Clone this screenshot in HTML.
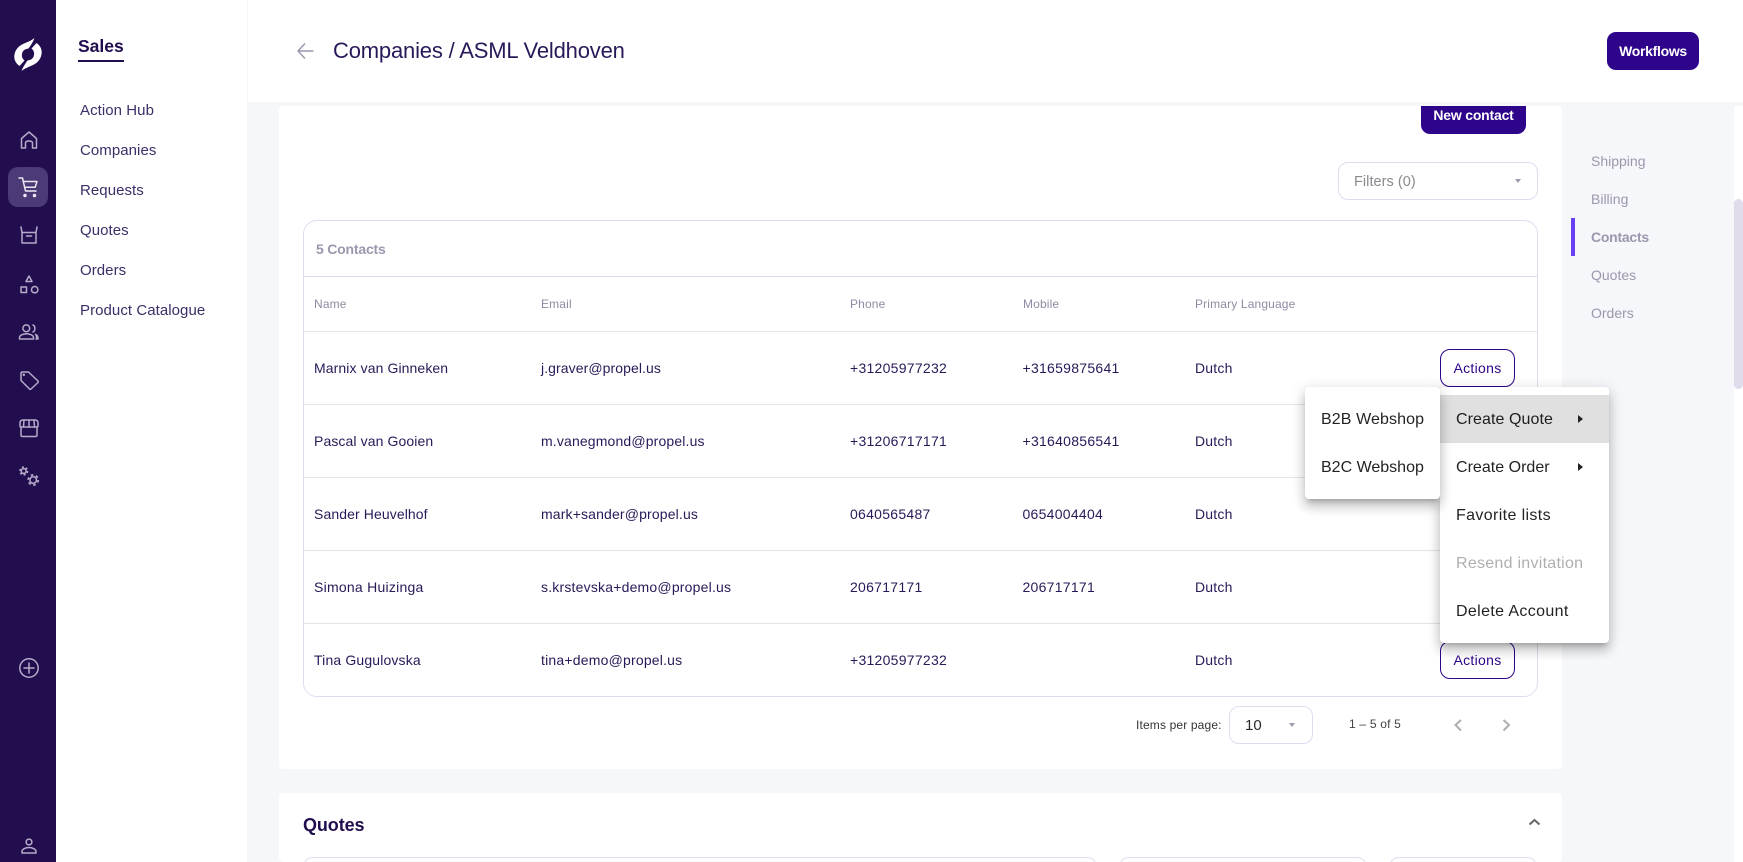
<!DOCTYPE html>
<html lang="en">
<head>
<meta charset="utf-8">
<title>Companies / ASML Veldhoven</title>
<style>
*{box-sizing:border-box}
html,body{margin:0;padding:0;width:1743px;height:862px;overflow:hidden;background:#f6f7fa;font-family:"Liberation Sans",sans-serif;color:#220e4f}
#page{position:relative;width:1743px;height:862px;overflow:hidden;background:#f6f7fa}
.a{position:absolute}
.t{position:absolute;white-space:nowrap;line-height:20px;height:20px}
.rail{left:0;top:0;width:56px;height:862px;background:#220e4f}
.side{left:56px;top:0;width:191px;height:862px;background:#fff}
.head{left:247px;top:0;width:1496px;height:102px;background:#fff;border-left:1px solid #f6f6f9}
.track{left:1734px;top:106px;width:9px;height:756px;background:#fff}
.thumb{left:1734px;top:199px;width:9px;height:190px;background:#e0dcec;border-radius:5px}
.card{background:#fff;border-radius:4px}
.nav{font-size:15px;color:#3d2e68;left:80px;letter-spacing:.06px}
.rnav{font-size:14px;color:#9b97ad;left:1591px}
.box{border:1px solid #e0dcf0;background:#fff}
.line{height:1px;left:304px;width:1233px}
.th{font-size:12px;letter-spacing:.15px;color:#8f8ba3}
.td{font-size:14px;color:#2a1958}
.n{left:314px;letter-spacing:.1px}
.e{left:541px;letter-spacing:.2px}
.p{left:850px;letter-spacing:.27px}
.m{left:1022.5px;letter-spacing:.27px}
.l{left:1195px;letter-spacing:.2px}
.btn{border:1px solid #2e048a;border-radius:10px;background:#fff;color:#2e048a;font-size:14px;letter-spacing:.3px;text-align:center;line-height:36px;left:1440px;width:75px;height:38px}
.menu{background:#fff;border-radius:4px;box-shadow:0 5px 5px -3px rgba(0,0,0,.2),0 8px 10px 1px rgba(0,0,0,.14),0 3px 14px 2px rgba(0,0,0,.12)}
.mi{font-size:16px;color:rgba(0,0,0,.87)}
.caret{width:0;height:0;border-left:3.5px solid transparent;border-right:3.5px solid transparent;border-top:4px solid #9e9ab0}
.ar{width:0;height:0;border-top:4px solid transparent;border-bottom:4px solid transparent;border-left:5px solid #222}
svg{position:absolute;left:0;top:0;overflow:visible}
</style>
</head>
<body>
<div id="page">
<div class="a head"></div>
<div class="a track"></div>
<div class="a thumb"></div>

<div class="a card" style="left:279px;top:106px;width:1283px;height:663px"></div>
<div class="a card" style="left:279px;top:793px;width:1283px;height:69px"></div>

<div class="a rail"></div>
<div class="a" style="left:8px;top:167px;width:40px;height:40px;border-radius:10px;background:#4b3a75"></div>
<div class="a side"></div>

<svg width="56" height="862" fill="none" stroke="#b4aac9" stroke-width="1.5" stroke-linecap="round" stroke-linejoin="round">
  <g stroke="none" fill="#fff">
    <path d="M34.5 38C31 41 27 42 22 44.5C15.5 48 13 55 15 60.5C16 63 17.5 64.5 19.5 66L24.5 60.5C22.5 59 21.5 56.5 22 54C22.5 50.5 25 49 28.5 48.5C31 45 33 42 34.5 38Z"/>
    <path transform="rotate(180 28 54.5)" d="M34.5 38C31 41 27 42 22 44.5C15.5 48 13 55 15 60.5C16 63 17.5 64.5 19.5 66L24.5 60.5C22.5 59 21.5 56.5 22 54C22.5 50.5 25 49 28.5 48.5C31 45 33 42 34.5 38Z"/>
  </g>
  <path d="M21.5 148V138.5L29 132L36.5 138.5V148H32.5V143Q32.5 141 29 141Q25.5 141 25.5 143V148Z"/>
  <g stroke="#ece8f3">
    <path d="M19 178H22.5L25.5 191H36"/>
    <path d="M23.2 181.5H37L35.2 187.2H24.6"/>
    <circle cx="25" cy="195.5" r="1" fill="#ece8f3"/>
    <circle cx="34.5" cy="195.5" r="1" fill="#ece8f3"/>
  </g>
  <path d="M21 227L22 232.5M37 227L36 232.5M22 232.5H36V243H22ZM26.5 236H31.5"/>
  <path d="M29 276L32 281.5H26Z"/>
  <rect x="21" y="287" width="5.5" height="5.5"/>
  <circle cx="34.7" cy="289.7" r="3.2"/>
  <circle cx="26.3" cy="328.3" r="3.4"/>
  <path d="M33 325C35.5 326 35.5 331 33 332"/>
  <path d="M19.5 339V337.5C19.5 335 24 333.8 26.5 333.8C29 333.8 33.5 335 33.5 337.5V339Z"/>
  <path d="M35.5 334.5C37.5 335 38 337 38 339H36" fill="#b4aac9"/>
  <path d="M21 373.5Q21 372 22.5 372H28.5L38 381Q38.5 381.8 38 382.5L31 389Q30.2 389.6 29.5 389L21 380.5Z"/>
  <circle cx="23.8" cy="374.8" r=".5" fill="#b4aac9"/>
  <path d="M20 426V423Q20 420 23 420H35Q38 420 38 423V426Q38 427 36.5 427H21.5Q20 427 20 426Z"/>
  <path d="M24 420L23.5 427M29 420V427M34 420L34.5 427"/>
  <path d="M21 427V435Q21 436.5 22.5 436.5H35.5Q37 436.5 37 435V427"/>
  <circle cx="23.7" cy="471" r="2.4"/>
  <circle cx="23.7" cy="471" r="3.8" stroke-width="1.6" stroke-dasharray="2.1 1.88" stroke-linecap="butt"/>
  <circle cx="33.2" cy="480" r="3.3"/>
  <circle cx="33.2" cy="480" r="5" stroke-width="1.8" stroke-dasharray="2.6 2.64" stroke-linecap="butt"/>
  <circle cx="29" cy="668" r="9.2"/>
  <path d="M29 663V673M24 668H34"/>
  <circle cx="29" cy="842" r="2.9"/>
  <path d="M22 853V851.5C22 849 26 847.5 29 847.5C32 847.5 36 849 36 851.5V853Z"/>
</svg>

<div class="t" style="left:78px;top:36px;font-size:17.5px;font-weight:700;color:#220e4f">Sales</div>
<div class="a" style="left:78px;top:60px;width:46px;height:2px;background:#220e4f"></div>
<div class="t nav" style="top:101px">Action Hub</div>
<div class="t nav" style="top:141px">Companies</div>
<div class="t nav" style="top:181px">Requests</div>
<div class="t nav" style="top:221px">Quotes</div>
<div class="t nav" style="top:261px">Orders</div>
<div class="t nav" style="top:301px">Product Catalogue</div>

<svg width="1743" height="862" fill="none" style="pointer-events:none">
  <path d="M298.5 51H313.5M305 43.5L298 51L305 58.5" stroke="#9a96ab" stroke-width="1.4"/>
</svg>
<div class="t" style="left:333px;top:41px;font-size:22px;letter-spacing:-.18px;color:#2a1958">Companies / ASML Veldhoven</div>

<div class="a" style="left:1607px;top:32px;width:92px;height:38px;background:#2e048a;border-radius:9px;color:#fff;font-size:14px;letter-spacing:-.3px;font-weight:700;text-align:center;line-height:38px">Workflows</div>

<div class="a" style="left:1421px;top:106px;width:105px;height:28px;background:#2e048a;border-radius:0 0 9px 9px;color:#fff;font-size:14px;letter-spacing:-.2px;font-weight:700;text-align:center;line-height:18px">New contact</div>

<div class="a box" style="left:1338px;top:162px;width:200px;height:38px;border-radius:10px"></div>
<div class="t" style="left:1354px;top:172px;font-size:14.5px;letter-spacing:.05px;color:#8a8a8f">Filters (0)</div>
<div class="a caret" style="left:1514.5px;top:179px"></div>

<div class="t rnav" style="top:151px">Shipping</div>
<div class="t rnav" style="top:189px">Billing</div>
<div class="t rnav" style="top:227px;font-weight:700;letter-spacing:-.25px">Contacts</div>
<div class="t rnav" style="top:265px">Quotes</div>
<div class="t rnav" style="top:303px">Orders</div>
<div class="a" style="left:1571px;top:218px;width:4px;height:38px;background:#6a3ff5"></div>

<div class="a box" style="left:303px;top:220px;width:1235px;height:477px;border-radius:14px"></div>
<div class="t" style="left:316px;top:239px;font-size:14px;letter-spacing:-.2px;font-weight:700;color:#9b97ad">5 Contacts</div>
<div class="a line" style="top:276px;background:#e0dcf0"></div>
<div class="a line" style="top:331px;background:#e4e4ea"></div>
<div class="a line" style="top:404px;background:#e4e4e4"></div>
<div class="a line" style="top:477px;background:#e4e4e4"></div>
<div class="a line" style="top:550px;background:#e4e4e4"></div>
<div class="a line" style="top:623px;background:#e4e4e4"></div>

<div class="t th" style="left:314px;top:294px">Name</div>
<div class="t th" style="left:541px;top:294px">Email</div>
<div class="t th" style="left:850px;top:294px">Phone</div>
<div class="t th" style="left:1023px;top:294px">Mobile</div>
<div class="t th" style="left:1195px;top:294px">Primary Language</div>

<div class="t td n" style="top:358px">Marnix van Ginneken</div>
<div class="t td e" style="top:358px;letter-spacing:.08px">j.graver@propel.us</div>
<div class="t td p" style="top:358px">+31205977232</div>
<div class="t td m" style="top:358px">+31659875641</div>
<div class="t td l" style="top:358px">Dutch</div>
<div class="a btn" style="top:349px">Actions</div>

<div class="t td n" style="top:431px">Pascal van Gooien</div>
<div class="t td e" style="top:431px;letter-spacing:.15px">m.vanegmond@propel.us</div>
<div class="t td p" style="top:431px">+31206717171</div>
<div class="t td m" style="top:431px">+31640856541</div>
<div class="t td l" style="top:431px">Dutch</div>

<div class="t td n" style="top:504px">Sander Heuvelhof</div>
<div class="t td e" style="top:504px;letter-spacing:.15px">mark+sander@propel.us</div>
<div class="t td p" style="top:504px">0640565487</div>
<div class="t td m" style="top:504px">0654004404</div>
<div class="t td l" style="top:504px">Dutch</div>

<div class="t td n" style="top:577px;letter-spacing:.25px">Simona Huizinga</div>
<div class="t td e" style="top:577px">s.krstevska+demo@propel.us</div>
<div class="t td p" style="top:577px">206717171</div>
<div class="t td m" style="top:577px">206717171</div>
<div class="t td l" style="top:577px">Dutch</div>

<div class="t td n" style="top:650px;letter-spacing:.15px">Tina Gugulovska</div>
<div class="t td e" style="top:650px">tina+demo@propel.us</div>
<div class="t td p" style="top:650px">+31205977232</div>
<div class="t td l" style="top:650px">Dutch</div>
<div class="a btn" style="top:641px">Actions</div>

<div class="t" style="left:1136px;top:715px;font-size:12px;letter-spacing:.15px;color:#333">Items per page:</div>
<div class="a box" style="left:1229px;top:706px;width:84px;height:38px;border-radius:10px"></div>
<div class="t" style="left:1245px;top:716px;font-size:15px;color:#2b2b2b">10</div>
<div class="a caret" style="left:1288.5px;top:723px"></div>
<div class="t" style="left:1349px;top:714px;font-size:12px;letter-spacing:.2px;color:#444">1 – 5 of 5</div>
<svg width="1743" height="862" fill="none">
  <path d="M1461 720L1455.5 725L1461 730.5" stroke="#aeaeae" stroke-width="2"/>
  <path d="M1503.5 720L1509 725L1503.5 730.5" stroke="#aeaeae" stroke-width="2"/>
  <path d="M1529.5 824.5L1534.5 820L1539.5 824.5" stroke="#666" stroke-width="2"/>
</svg>

<div class="t" style="left:303px;top:814.5px;font-size:18px;letter-spacing:-.1px;font-weight:700;color:#220e4f">Quotes</div>
<div class="a box" style="left:303px;top:857px;width:794px;height:40px;border-radius:10px"></div>
<div class="a box" style="left:1119px;top:857px;width:248px;height:40px;border-radius:10px"></div>
<div class="a box" style="left:1389px;top:857px;width:148px;height:40px;border-radius:10px"></div>

<div class="a menu" style="left:1440px;top:387px;width:169px;height:256px"></div>
<div class="a" style="left:1440px;top:395px;width:169px;height:48px;background:#e0e0e0"></div>
<div class="t mi" style="left:1456px;top:410px;letter-spacing:.08px">Create Quote</div>
<div class="a ar" style="left:1578px;top:415px"></div>
<div class="t mi" style="left:1456px;top:458px;letter-spacing:.02px">Create Order</div>
<div class="a ar" style="left:1578px;top:463px"></div>
<div class="t mi" style="left:1456px;top:506px;letter-spacing:.37px">Favorite lists</div>
<div class="t mi" style="left:1456px;top:554px;letter-spacing:.27px;color:rgba(0,0,0,.32)">Resend invitation</div>
<div class="t mi" style="left:1456px;top:602px;letter-spacing:.36px">Delete Account</div>

<div class="a menu" style="left:1305px;top:387px;width:135px;height:112px"></div>
<div class="t mi" style="left:1321px;top:410px;letter-spacing:.1px">B2B Webshop</div>
<div class="t mi" style="left:1321px;top:458px">B2C Webshop</div>
</div>
</body>
</html>
